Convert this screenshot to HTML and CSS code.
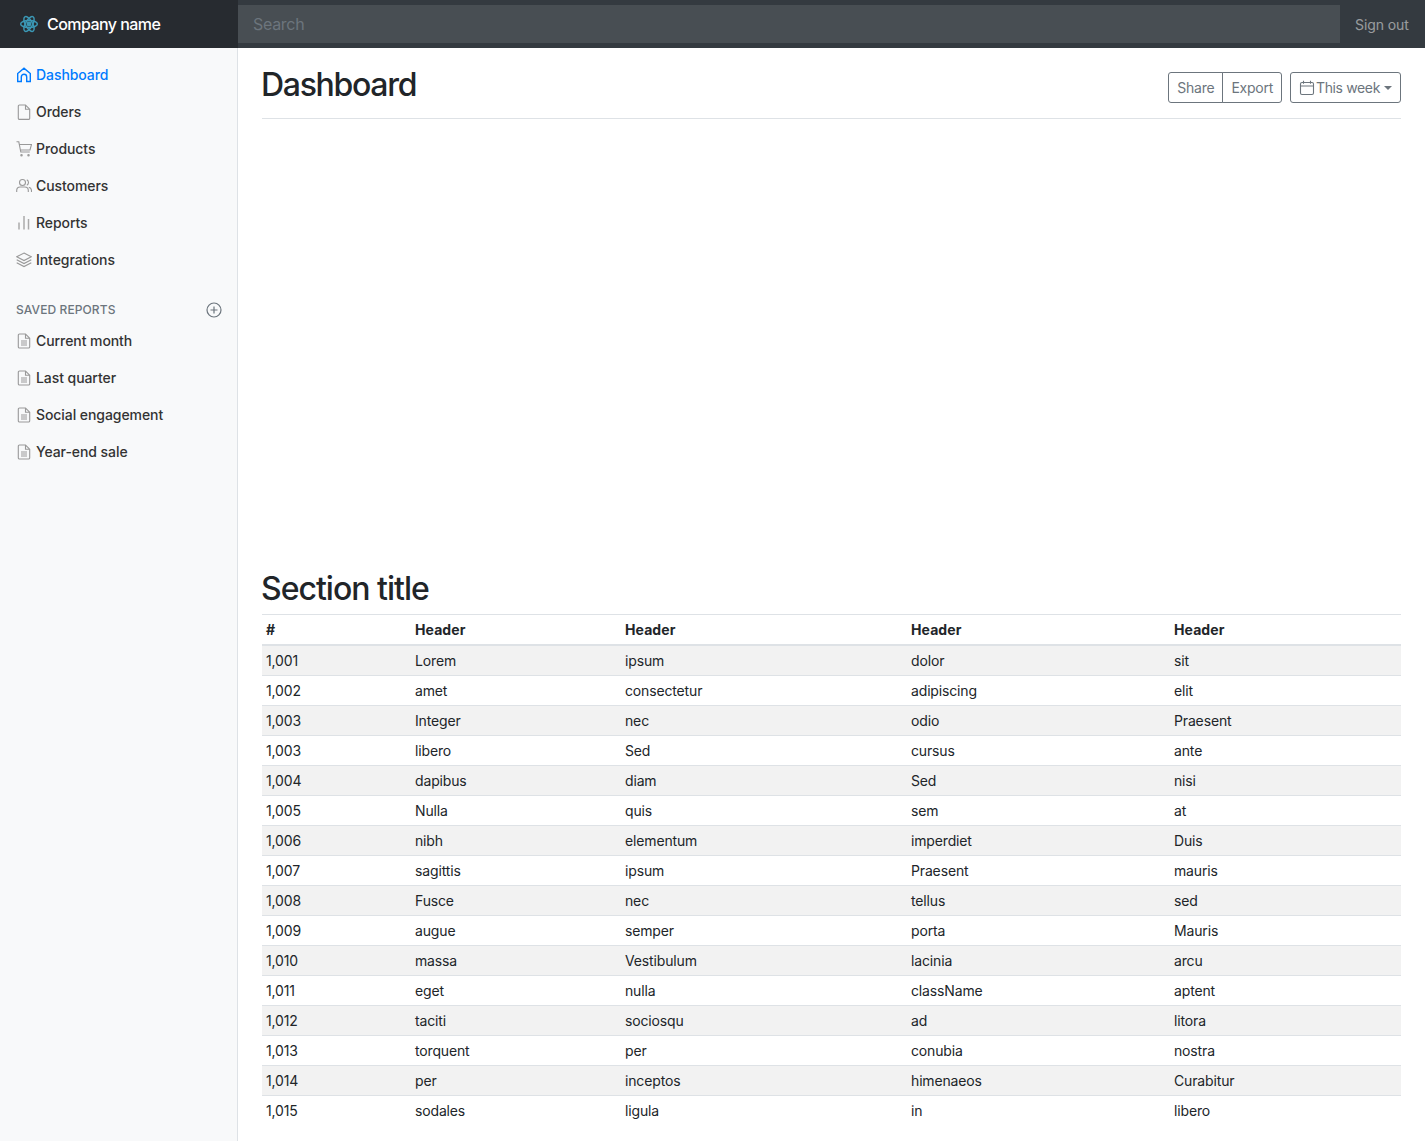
FILE: index.html
```html
<!DOCTYPE html>
<html lang="en">
<head>
  <meta charset="UTF-8">
  <title>Dashboard</title>
  <link rel="stylesheet" href="styles.css">
</head>
<body>
  <header class="navbar">
    <a class="brand" href="#">
      <svg class="logo" viewBox="0 0 24 24" fill="none" stroke="#3b97b4" stroke-width="1.8">
        <circle cx="12" cy="12" r="2" fill="#3b97b4"/>
        <ellipse cx="12" cy="12" rx="10" ry="4.2"/>
        <ellipse cx="12" cy="12" rx="10" ry="4.2" transform="rotate(60 12 12)"/>
        <ellipse cx="12" cy="12" rx="10" ry="4.2" transform="rotate(120 12 12)"/>
      </svg>
      Company name
    </a>
    <input class="search" type="text" placeholder="Search">
    <a class="signout" href="#">Sign out</a>
  </header>

  <div class="layout">
    <nav class="sidebar">
      <ul class="nav">
        <li><a class="nav-link active" href="#">
          <svg class="icon" viewBox="0 0 16 16"><path d="M1.7 14.5V6.5L8 1.2l6.3 5.300v8h-3.600V10a2.700 2.700 0 0 0-5.400 0v4.500z"/></svg>
          Dashboard</a></li>
        <li><a class="nav-link" href="#">
          <svg class="icon" viewBox="0 0 16 16"><path d="M9.500 1H3.500a1.200 1.200 0 0 0-1.200 1.200v12a1.200 1.200 0 0 0 1.200 1.200h9a1.200 1.200 0 0 0 1.200-1.200V5.200zM9.500 1v4.200h4.200"/></svg>
          Orders</a></li>
        <li><a class="nav-link" href="#">
          <svg class="icon" viewBox="0 0 16 16"><path d="M.5 .8h2.300l2 10.200h9M3.200 3.500h12.300l-1.500 5.500H4.200"/><circle cx="5.500" cy="14.200" r=".7"/><circle cx="12.500" cy="14.200" r=".7"/></svg>
          Products</a></li>
        <li><a class="nav-link" href="#">
          <svg class="icon" viewBox="0 0 16 16"><circle cx="6.500" cy="4.500" r="3"/><path d="M.7 14v-1.500a3.500 3.500 0 0 1 3.500-3.500h4.600a3.500 3.500 0 0 1 3.500 3.500V14M10.800 1.800a3 3 0 0 1 0 5.400M12.800 9.200a3.500 3.500 0 0 1 2.700 3.300V14"/></svg>
          Customers</a></li>
        <li><a class="nav-link" href="#">
          <svg class="icon icon-bars" viewBox="0 0 16 16"><path d="M3 14.500V7.500M8 14.500V1M12.500 14.500V4"/></svg>
          Reports</a></li>
        <li><a class="nav-link" href="#">
          <svg class="icon" viewBox="0 0 16 16"><path d="M8 1 15.300 4.800 8 8.600.7 4.800zM.7 7.800 8 11.600l7.300-3.800M.7 10.800 8 14.600l7.300-3.800"/></svg>
          Integrations</a></li>
      </ul>

      <h6 class="sidebar-heading">
        <span>Saved reports</span>
        <svg class="add-icon" viewBox="0 0 16 16"><circle cx="8" cy="8" r="7"/><path d="M8 4.500v7M4.500 8h7"/></svg>
      </h6>
      <ul class="nav">
        <li><a class="nav-link" href="#">
          <svg class="icon" viewBox="0 0 16 16"><path d="M9.500 1H3.500a1.200 1.200 0 0 0-1.200 1.200v11.600a1.200 1.200 0 0 0 1.200 1.200h9a1.200 1.200 0 0 0 1.200-1.200V5.200zM9.500 1v4.200h4.200M5 8h6M5 10h6M5 12h6"/></svg>
          Current month</a></li>
        <li><a class="nav-link" href="#">
          <svg class="icon" viewBox="0 0 16 16"><path d="M9.500 1H3.500a1.200 1.200 0 0 0-1.200 1.200v11.600a1.200 1.200 0 0 0 1.200 1.200h9a1.200 1.200 0 0 0 1.200-1.200V5.200zM9.500 1v4.200h4.200M5 8h6M5 10h6M5 12h6"/></svg>
          Last quarter</a></li>
        <li><a class="nav-link" href="#">
          <svg class="icon" viewBox="0 0 16 16"><path d="M9.500 1H3.500a1.200 1.200 0 0 0-1.200 1.200v11.600a1.200 1.200 0 0 0 1.200 1.200h9a1.200 1.200 0 0 0 1.200-1.200V5.200zM9.500 1v4.200h4.200M5 8h6M5 10h6M5 12h6"/></svg>
          Social engagement</a></li>
        <li><a class="nav-link" href="#">
          <svg class="icon" viewBox="0 0 16 16"><path d="M9.500 1H3.500a1.200 1.200 0 0 0-1.200 1.200v11.600a1.200 1.200 0 0 0 1.200 1.200h9a1.200 1.200 0 0 0 1.200-1.200V5.200zM9.500 1v4.200h4.200M5 8h6M5 10h6M5 12h6"/></svg>
          Year-end sale</a></li>
      </ul>
    </nav>

    <main class="main">
      <div class="page-header">
        <h1>Dashboard</h1>
        <div class="toolbar">
          <div class="btn-group">
            <button class="btn">Share</button>
            <button class="btn">Export</button>
          </div>
          <button class="btn btn-week">
            <svg class="cal-icon" viewBox="0 0 16 16"><rect x="1.500" y="2.500" width="13" height="12" rx="1.500"/><path d="M1.500 6h13M4.500 .8v3M11.500 .8v3"/></svg>
            This week
            <span class="caret"></span>
          </button>
        </div>
      </div>

      <div class="chart"></div>

      <h2>Section title</h2>
      <table class="data-table">
        <thead>
          <tr><th>#</th><th>Header</th><th>Header</th><th>Header</th><th>Header</th></tr>
        </thead>
        <tbody>
          <tr><td>1,001</td><td>Lorem</td><td>ipsum</td><td>dolor</td><td>sit</td></tr>
          <tr><td>1,002</td><td>amet</td><td>consectetur</td><td>adipiscing</td><td>elit</td></tr>
          <tr><td>1,003</td><td>Integer</td><td>nec</td><td>odio</td><td>Praesent</td></tr>
          <tr><td>1,003</td><td>libero</td><td>Sed</td><td>cursus</td><td>ante</td></tr>
          <tr><td>1,004</td><td>dapibus</td><td>diam</td><td>Sed</td><td>nisi</td></tr>
          <tr><td>1,005</td><td>Nulla</td><td>quis</td><td>sem</td><td>at</td></tr>
          <tr><td>1,006</td><td>nibh</td><td>elementum</td><td>imperdiet</td><td>Duis</td></tr>
          <tr><td>1,007</td><td>sagittis</td><td>ipsum</td><td>Praesent</td><td>mauris</td></tr>
          <tr><td>1,008</td><td>Fusce</td><td>nec</td><td>tellus</td><td>sed</td></tr>
          <tr><td>1,009</td><td>augue</td><td>semper</td><td>porta</td><td>Mauris</td></tr>
          <tr><td>1,010</td><td>massa</td><td>Vestibulum</td><td>lacinia</td><td>arcu</td></tr>
          <tr><td>1,011</td><td>eget</td><td>nulla</td><td>className</td><td>aptent</td></tr>
          <tr><td>1,012</td><td>taciti</td><td>sociosqu</td><td>ad</td><td>litora</td></tr>
          <tr><td>1,013</td><td>torquent</td><td>per</td><td>conubia</td><td>nostra</td></tr>
          <tr><td>1,014</td><td>per</td><td>inceptos</td><td>himenaeos</td><td>Curabitur</td></tr>
          <tr><td>1,015</td><td>sodales</td><td>ligula</td><td>in</td><td>libero</td></tr>
        </tbody>
      </table>
    </main>
  </div>
</body>
</html>
```

FILE: styles.css
```css
* {
  box-sizing: border-box;
}

body {
  margin: 0;
  font-family: Inter, sans-serif;
  font-size: 16px;
  line-height: 1.5;
  color: #212529;
  background-color: #fff;
}

a {
  text-decoration: none;
}

/* top bar */
.navbar {
  display: flex;
  align-items: center;
  height: 48px;
  background-color: #343a40;
}

.brand {
  display: flex;
  align-items: center;
  gap: 8px;
  flex: 0 0 238px;
  height: 48px;
  padding-left: 19px;
  font-size: 16px;
  font-weight: 500;
  letter-spacing: -.55px;
  color: #fff;
  background-color: #272b30;
}

.logo {
  width: 20px;
  height: 20px;
}

.search {
  flex: 1;
  height: 38px;
  padding: 0 15px;
  font: inherit;
  letter-spacing: -.3px;
  color: #fff;
  background-color: #484e53;
  border: 0;
  border-radius: 0;
}

.search::placeholder {
  color: #6c757d;
}

.signout {
  flex: 0 0 85px;
  padding-left: 15px;
  font-size: 14px;
  letter-spacing: -.1px;
  color: rgba(255, 255, 255, .5);
}

/* sidebar */
.layout {
  display: flex;
  min-height: 1093px;
}

.sidebar {
  flex: 0 0 238px;
  padding-top: 8px;
  background-color: #f8f9fa;
  border-right: 1px solid #dee2e6;
}

.nav {
  margin: 0;
  padding: 0;
  list-style: none;
}

.nav-link {
  display: flex;
  align-items: center;
  gap: 4px;
  height: 37px;
  padding: 0 16px;
  font-size: 14px;
  font-weight: 500;
  letter-spacing: -.07px;
  color: #333;
}

.nav-link.active {
  color: #007bff;
}

.icon {
  width: 16px;
  height: 16px;
  fill: none;
  stroke: #999;
  stroke-width: 1.1;
}

.active .icon {
  stroke: #007bff;
  stroke-width: 1.4;
}

.icon-bars {
  stroke-width: 1.5;
  stroke: #aaa;
}

.sidebar-heading {
  display: flex;
  align-items: center;
  justify-content: space-between;
  margin: 23px 0 3px;
  padding: 0 15px 0 16px;
  height: 18px;
  font-size: 12px;
  font-weight: 500;
  letter-spacing: .1px;
  text-transform: uppercase;
  color: #6c757d;
}

.add-icon {
  width: 16px;
  height: 16px;
  fill: none;
  stroke: #6c757d;
  stroke-width: 1.2;
}

/* main */
.main {
  flex: 1;
  min-width: 0;
  padding: 0 24px;
}

.page-header {
  display: flex;
  justify-content: space-between;
  padding-top: 18px;
  padding-bottom: 8px;
  margin-bottom: 16px;
  border-bottom: 1px solid #dee2e6;
}

h1 {
  margin: 0 0 6px -1px;
  font-size: 32px;
  font-weight: 500;
  letter-spacing: -1.3px;
  line-height: 1.2;
}

h2 {
  margin: 0 0 5px -1px;
  font-size: 32px;
  font-weight: 500;
  letter-spacing: -1px;
  line-height: 1.2;
}

.toolbar {
  display: flex;
  gap: 8px;
  margin-top: 6px;
}

.btn-group {
  display: flex;
}

.btn {
  height: 31px;
  padding: 0 8px;
  font: 14px Inter, sans-serif;
  letter-spacing: -.25px;
  color: #6c757d;
  background: transparent;
  border: 1px solid #6c757d;
  border-radius: 3px;
}

.btn-group .btn:first-child {
  border-radius: 3px 0 0 3px;
}

.btn-group .btn:last-child {
  margin-left: -1px;
  border-radius: 0 3px 3px 0;
}

.btn-week {
  display: flex;
  align-items: center;
  letter-spacing: -.36px;
}

.cal-icon {
  width: 16px;
  height: 16px;
  margin-right: 1px;
  fill: none;
  stroke: #6c757d;
  stroke-width: 1.1;
}

.caret {
  margin-left: 4px;
  border-top: 4px solid #6c757d;
  border-left: 4px solid transparent;
  border-right: 4px solid transparent;
}

.chart {
  height: 435px;
}

/* table */
.data-table {
  width: 100%;
  table-layout: fixed;
  border-collapse: collapse;
  font-size: 14px;
  line-height: 21px;
}

.data-table th,
.data-table td {
  padding: 4px;
  text-align: left;
  border-top: 1px solid #dee2e6;
}

.data-table td {
  letter-spacing: -.15px;
}

.data-table th {
  font-weight: 700;
  letter-spacing: .1px;
  border-bottom: 2px solid #dee2e6;
}

.data-table th:nth-child(1) { width: 149px; }
.data-table th:nth-child(2) { width: 210px; }
.data-table th:nth-child(3) { width: 286px; }
.data-table th:nth-child(4) { width: 263px; }

.data-table tbody tr:nth-child(odd) {
  background-color: rgba(0, 0, 0, .05);
}
```
